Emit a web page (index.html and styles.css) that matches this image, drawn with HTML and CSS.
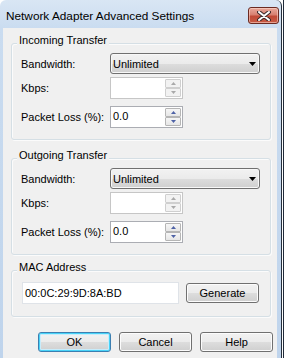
FILE: index.html
```html
<!DOCTYPE html>
<html>
<head>
<meta charset="utf-8">
<link rel="stylesheet" href="styles.css">
</head>
<body>
<div class="screen">
  <div class="window">
    <div class="titlebar">
      <span class="title">Network Adapter Advanced Settings</span>
      <div class="close">
        <svg width="14" height="10" viewBox="0 0 14 10"><path d="M2 1 L12 9 M12 1 L2 9" stroke="#3b2a2a" stroke-width="4" stroke-linecap="round"/><path d="M2 1 L12 9 M12 1 L2 9" stroke="#ffffff" stroke-width="2" stroke-linecap="round"/></svg>
      </div>
    </div>
    <div class="client">
      <div class="group">
        <div class="group-title">Incoming Transfer</div>
        <div class="row row-combo">
          <span class="lbl">Bandwidth:</span>
          <div class="combo"><span class="combo-text">Unlimited</span><svg class="combo-arrow" width="7" height="4" viewBox="0 0 7 4"><path d="M0 0 H7 L3.5 4 Z" fill="#000"/></svg></div>
        </div>
        <div class="row row-spin1">
          <span class="lbl">Kbps:</span>
          <div class="spin disabled">
            <div class="spin-field"></div>
            <div class="spin-btns">
              <span class="sb"><svg width="5" height="3" viewBox="0 0 5 3"><path d="M0 3 L2.5 0 L5 3 Z"/></svg></span>
              <span class="sb"><svg width="5" height="3" viewBox="0 0 5 3"><path d="M0 0 L5 0 L2.5 3 Z"/></svg></span>
            </div>
          </div>
        </div>
        <div class="row row-spin2">
          <span class="lbl">Packet Loss (%):</span>
          <div class="spin">
            <div class="spin-field">0.0</div>
            <div class="spin-btns">
              <span class="sb"><svg width="5" height="3" viewBox="0 0 5 3"><path d="M0 3 L2.5 0 L5 3 Z"/></svg></span>
              <span class="sb"><svg width="5" height="3" viewBox="0 0 5 3"><path d="M0 0 L5 0 L2.5 3 Z"/></svg></span>
            </div>
          </div>
        </div>
      </div>

      <div class="group group-out">
        <div class="group-title">Outgoing Transfer</div>
        <div class="row row-combo">
          <span class="lbl">Bandwidth:</span>
          <div class="combo"><span class="combo-text">Unlimited</span><svg class="combo-arrow" width="7" height="4" viewBox="0 0 7 4"><path d="M0 0 H7 L3.5 4 Z" fill="#000"/></svg></div>
        </div>
        <div class="row row-spin1">
          <span class="lbl">Kbps:</span>
          <div class="spin disabled">
            <div class="spin-field"></div>
            <div class="spin-btns">
              <span class="sb"><svg width="5" height="3" viewBox="0 0 5 3"><path d="M0 3 L2.5 0 L5 3 Z"/></svg></span>
              <span class="sb"><svg width="5" height="3" viewBox="0 0 5 3"><path d="M0 0 L5 0 L2.5 3 Z"/></svg></span>
            </div>
          </div>
        </div>
        <div class="row row-spin2">
          <span class="lbl">Packet Loss (%):</span>
          <div class="spin">
            <div class="spin-field">0.0</div>
            <div class="spin-btns">
              <span class="sb"><svg width="5" height="3" viewBox="0 0 5 3"><path d="M0 3 L2.5 0 L5 3 Z"/></svg></span>
              <span class="sb"><svg width="5" height="3" viewBox="0 0 5 3"><path d="M0 0 L5 0 L2.5 3 Z"/></svg></span>
            </div>
          </div>
        </div>
      </div>

      <div class="group group-mac">
        <div class="group-title">MAC Address</div>
        <div class="row row-mac">
          <div class="mac-field">00:0C:29:9D:8A:BD</div>
          <div class="btn btn-gen">Generate</div>
        </div>
      </div>

      <div class="actions">
        <div class="btn btn-default">OK</div>
        <div class="btn">Cancel</div>
        <div class="btn">Help</div>
      </div>
    </div>
  </div>
  <div class="backdrop"></div>
</div>
</body>
</html>
```

FILE: styles.css
```css
* { box-sizing: border-box; }
html, body { margin: 0; padding: 0; }
body {
  font-family: "Liberation Sans", Arial, sans-serif;
  font-size: 11px;
  color: #000;
  background: #ffffff;
}
.screen {
  display: flex;
  width: 285px;
  height: 358px;
  overflow: hidden;
}
.window {
  width: 282px;
  flex: none;
  display: flex;
  flex-direction: column;
  background: linear-gradient(180deg, #d9e6f4 0px, #cadcf0 28px, #bfd4ec 100%);
  border-right: 1px solid #26303c;
  border-radius: 6px 6px 0 0;
}
.titlebar {
  height: 28px;
  flex: none;
  display: flex;
  align-items: flex-start;
  padding-left: 6px;
}
.title {
  margin-top: 9px;
  font-size: 11.8px;
  line-height: 14px;
  color: #000;
}
.close {
  margin-left: auto;
  margin-top: 7px;
  margin-right: 2px;
  width: 31px;
  height: 17px;
  border: 1px solid #6b2b22;
  border-radius: 3px;
  background: linear-gradient(180deg, #e8a99b 0%, #d88070 45%, #c14a36 55%, #c75b44 100%);
  box-shadow: inset 0 0 0 1px rgba(255,220,210,0.55);
  display: flex;
  align-items: center;
  justify-content: center;
}
.client {
  flex: 1;
  margin: 0 4px 0 3px;
  background: #f0f0f0;
  padding: 15px 6px 0 8px;
}
.group {
  border: 1px solid #d5dfe5;
  border-radius: 3px;
  box-shadow: inset 1px 1px 0 #fbfbfb, 1px 1px 0 #fbfbfb;
  padding: 0 9px 11px 9px;
}
.group-out { margin-top: 18px; }
.group-mac { margin-top: 15px; padding-bottom: 12px; }
.group-title {
  width: fit-content;
  margin: -11px 0 0 -4px;
  padding: 0 2px;
  background: #f0f0f0;
  line-height: 15px;
  color: #000;
}
.row {
  display: flex;
  align-items: center;
}
.row-combo { margin-top: 5px; height: 21px; }
.row-spin1 { margin-top: 3px; height: 22px; }
.row-spin2 { margin-top: 7px; height: 22px; }
.lbl {
  width: 89px;
  flex: none;
  color: #000;
}
.combo {
  width: 150px;
  height: 21px;
  border: 1px solid #707070;
  border-radius: 3px;
  background: linear-gradient(180deg, #f2f2f2 0%, #ebebeb 50%, #dddddd 51%, #cfcfcf 100%);
  box-shadow: inset 0 0 0 1px #f8f8f8;
  display: flex;
  align-items: center;
  padding: 0 3px 0 2px;
}
.combo-text { flex: 1; }
.combo-arrow { flex: none; margin-top: 1px; }
.spin {
  width: 73px;
  height: 22px;
  border: 1px solid #abadb3;
  background: #ffffff;
  display: flex;
}
.spin.disabled { border-color: #c6c6c6; }
.spin-field {
  flex: 1;
  padding-left: 2px;
  line-height: 19px;
}
.spin-btns {
  width: 17px;
  display: flex;
  flex-direction: column;
  padding: 1px 1px 1px 0;
}
.sb {
  flex: 1;
  border: 1px solid #b5b5b5;
  border-radius: 1px;
  background: linear-gradient(180deg, #f6f6f6 0%, #e6e6e6 100%);
  display: flex;
  align-items: center;
  justify-content: center;
}
.sb svg { fill: #4e62a6; }
.spin.disabled .sb { border-color: #cfcfcf; background: #f2f2f2; }
.spin.disabled .sb svg { fill: #a9a9a9; }
.row-mac { margin-top: 7px; height: 22px; }
.mac-field {
  width: 157px;
  height: 22px;
  margin-left: 1px;
  border: 1px solid #dfe3e8;
  background: #ffffff;
  padding-left: 2px;
  line-height: 20px;
}
.btn {
  width: 73px;
  height: 20px;
  border: 1px solid #707070;
  border-radius: 3px;
  background: linear-gradient(180deg, #f2f2f2 0%, #ebebeb 50%, #dddddd 51%, #cfcfcf 100%);
  box-shadow: inset 0 0 0 1px #fcfcfc;
  display: flex;
  align-items: center;
  justify-content: center;
  color: #000;
}
.btn-gen { margin-left: 7px; }
.btn-default {
  border-color: #3c7fb1;
  box-shadow: inset 0 0 0 1px #48d3f8, inset 0 0 0 2px #c8ecfb;
}
.actions {
  display: flex;
  justify-content: flex-end;
  gap: 8px;
  margin-top: 15px;
  margin-right: -2px;
}
.backdrop {
  flex: 1;
  background: linear-gradient(90deg, #ffffff 0, #ffffff 1px, #1f2a3a 1px, #1f2a3a 2px, #ffffff 2px);
}
```
